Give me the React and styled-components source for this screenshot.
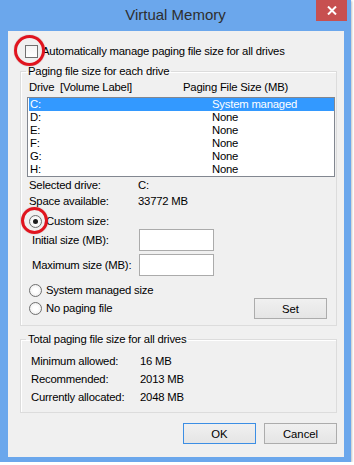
import React from 'react'
import styled, { createGlobalStyle } from 'styled-components';

const GlobalStyle = createGlobalStyle`
  body {
    margin: 0;
    background: #ffffff;
    font-family: "Liberation Sans", Arial, sans-serif;
    font-size: 11.3px;
    letter-spacing: -0.2px;
    color: #000;
  }
`;

const drives = [
    { letter: 'C:', size: 'System managed' },
    { letter: 'D:', size: 'None' },
    { letter: 'E:', size: 'None' },
    { letter: 'F:', size: 'None' },
    { letter: 'G:', size: 'None' },
    { letter: 'H:', size: 'None' },
];

const totals = [
    ['Minimum allowed:', '16 MB'],
    ['Recommended:', '2013 MB'],
    ['Currently allocated:', '2048 MB'],
];

function App() {
  return (
    <>
      <GlobalStyle />
      <Window>
        <TitleBar>
          <Title>Virtual Memory</Title>
          <CloseButton>
            <svg width="10" height="9" viewBox="0 0 10 9">
              <path d="M1 0.5 L9 8.5 M9 0.5 L1 8.5" stroke="#fff" strokeWidth="2" />
            </svg>
          </CloseButton>
        </TitleBar>

        <Client>
          <AutoRow>
            <Mark>
              <CheckBox />
              <Annotation $size={31} $left={-11} $top={-10} />
            </Mark>
            <span>Automatically manage paging file size for all drives</span>
          </AutoRow>

          <Group>
            <Legend>Paging file size for each drive</Legend>
            <ListHeader>
              <span>Drive</span>
              <span>[Volume Label]</span>
              <span>Paging File Size (MB)</span>
            </ListHeader>
            <DriveList>
              {drives.map((d, i) => (
                <DriveRow key={d.letter} $selected={i === 0}>
                  <span>{d.letter}</span>
                  <span>{d.size}</span>
                </DriveRow>
              ))}
            </DriveList>

            <InfoRow>
              <span>Selected drive:</span>
              <span>C:</span>
            </InfoRow>
            <InfoRow>
              <span>Space available:</span>
              <span>33772 MB</span>
            </InfoRow>

            <RadioRow $mt={6}>
              <Mark>
                <Radio $checked />
                <Annotation $size={27} $left={-8} $top={-8} />
              </Mark>
              <span>Custom size:</span>
            </RadioRow>

            <SizeRow $mt={1}>
              <span>Initial size (MB):</span>
              <TextBox />
            </SizeRow>
            <SizeRow $mt={3}>
              <span>Maximum size (MB):</span>
              <TextBox />
            </SizeRow>

            <RadioRow $mt={8}>
              <Radio />
              <span>System managed size</span>
            </RadioRow>
            <BottomRow>
              <RadioRow>
                <Radio />
                <span>No paging file</span>
              </RadioRow>
              <Button>Set</Button>
            </BottomRow>
          </Group>

          <Group $mt={6} $pb={6}>
            <Legend>Total paging file size for all drives</Legend>
            <TotalsList>
              {totals.map(([label, value]) => (
                <TotalRow key={label}>
                  <span>{label}</span>
                  <span>{value}</span>
                </TotalRow>
              ))}
            </TotalsList>
          </Group>

          <ButtonBar>
            <Button $default>OK</Button>
            <Button>Cancel</Button>
          </ButtonBar>
        </Client>
      </Window>
    </>
  )
}

export default App;

const Window = styled.div`
    width: 351px;
    height: 462px;
    background: #6ba7ec;
    display: flex;
    flex-direction: column;
    box-shadow: 1px 1px 2px rgba(0, 0, 0, 0.25);
`;

const TitleBar = styled.div`
    height: 31px;
    display: grid;
    grid-template-columns: 1fr auto 1fr;
    align-items: start;
`;

const Title = styled.div`
    grid-column: 2;
    padding-top: 6px;
    font-size: 15px;
    line-height: 18px;
    letter-spacing: 0;
    color: #2e2e2e;
`;

const CloseButton = styled.div`
    grid-column: 3;
    justify-self: end;
    width: 31px;
    height: 21px;
    margin-right: 4px;
    background: #c75050;
    display: flex;
    align-items: center;
    justify-content: center;
`;

const Client = styled.div`
    flex: 1;
    margin: 0 7px 5px 8px;
    background: #f0f0f0;
    display: flex;
    flex-direction: column;
`;

const AutoRow = styled.div`
    display: flex;
    align-items: center;
    gap: 4px;
    height: 13px;
    line-height: 13px;
    padding: 14px 0 0 17px;
`;

const Mark = styled.div`
    position: relative;
    width: 13px;
    height: 13px;
    flex: none;
`;

const Annotation = styled.span`
    position: absolute;
    left: ${p => p.$left}px;
    top: ${p => p.$top}px;
    width: ${p => p.$size}px;
    height: ${p => p.$size}px;
    box-sizing: border-box;
    border: 3px solid #e0141e;
    border-radius: 50%;
    box-shadow: 0 0 1px rgba(120, 0, 0, 0.5);
`;

const CheckBox = styled.span`
    display: block;
    width: 13px;
    height: 13px;
    box-sizing: border-box;
    border: 1px solid #707070;
    background: linear-gradient(#f4f4f4, #ffffff);
`;

const Radio = styled.span`
    display: flex;
    align-items: center;
    justify-content: center;
    flex: none;
    width: 13px;
    height: 13px;
    box-sizing: border-box;
    border: 1px solid #6f6f6f;
    border-radius: 50%;
    background: radial-gradient(circle, #ffffff 30%, #e6e6e6 100%);
    &::after {
        content: '';
        display: ${p => p.$checked ? 'block' : 'none'};
        width: 5px;
        height: 5px;
        border-radius: 50%;
        background: #1c1c1c;
    }
`;

const Group = styled.fieldset`
    margin: ${p => p.$mt || 6}px 7px 0 12px;
    padding: 0 1px ${p => p.$pb || 6}px 6px;
    width: 317px;
    box-sizing: border-box;
    border: 1px solid #dcdcdc;
    box-shadow: inset 1px 1px 0 #fff;
`;

const Legend = styled.legend`
    margin-left: -1px;
    padding: 0 2px;
    line-height: 14px;
`;

const ListHeader = styled.div`
    display: flex;
    margin-top: 3px;
    padding-left: 2px;
    line-height: 13px;
    > span:nth-child(1) { width: 31px; }
    > span:nth-child(2) { width: 123px; }
`;

const DriveList = styled.div`
    margin-top: 3px;
    height: 80px;
    box-sizing: border-box;
    border: 1px solid #828790;
    background: #fff;
`;

const DriveRow = styled.div`
    display: grid;
    grid-template-columns: 182px 1fr;
    height: 13px;
    line-height: 13px;
    margin-left: 1px;
    padding-left: 1px;
    background: ${p => p.$selected ? '#3399ff' : 'transparent'};
    color: ${p => p.$selected ? '#fff' : '#000'};
`;

const InfoRow = styled.div`
    display: grid;
    grid-template-columns: 109px 1fr;
    padding-left: 2px;
    line-height: 16px;
    &:first-of-type { margin-top: 2px; }
`;

const RadioRow = styled.div`
    display: flex;
    align-items: center;
    gap: 4px;
    height: 13px;
    line-height: 13px;
    margin-top: ${p => p.$mt || 0}px;
    padding-left: 2px;
`;

const SizeRow = styled.div`
    display: grid;
    grid-template-columns: 107px 75px;
    align-items: center;
    margin-top: ${p => p.$mt}px;
    padding-left: 5px;
`;

const TextBox = styled.div`
    height: 22px;
    box-sizing: border-box;
    border: 1px solid #ababab;
    background: #fff;
`;

const BottomRow = styled.div`
    display: flex;
    justify-content: space-between;
    align-items: center;
    margin-top: 1px;
    padding-right: 8px;
`;

const Button = styled.div`
    width: 73px;
    height: 21px;
    box-sizing: border-box;
    border: 1px solid ${p => p.$default ? '#3c8ee4' : '#acacac'};
    background: linear-gradient(#f0f0f0, #e5e5e5);
    display: flex;
    align-items: center;
    justify-content: center;
    letter-spacing: 0;
`;

const TotalsList = styled.div`
    margin-top: 6px;
    padding-left: 4px;
`;

const TotalRow = styled.div`
    display: grid;
    grid-template-columns: 109px 1fr;
    line-height: 18px;
`;

const ButtonBar = styled.div`
    display: flex;
    justify-content: flex-end;
    gap: 8px;
    margin-top: 10px;
    padding-right: 7px;
`;
